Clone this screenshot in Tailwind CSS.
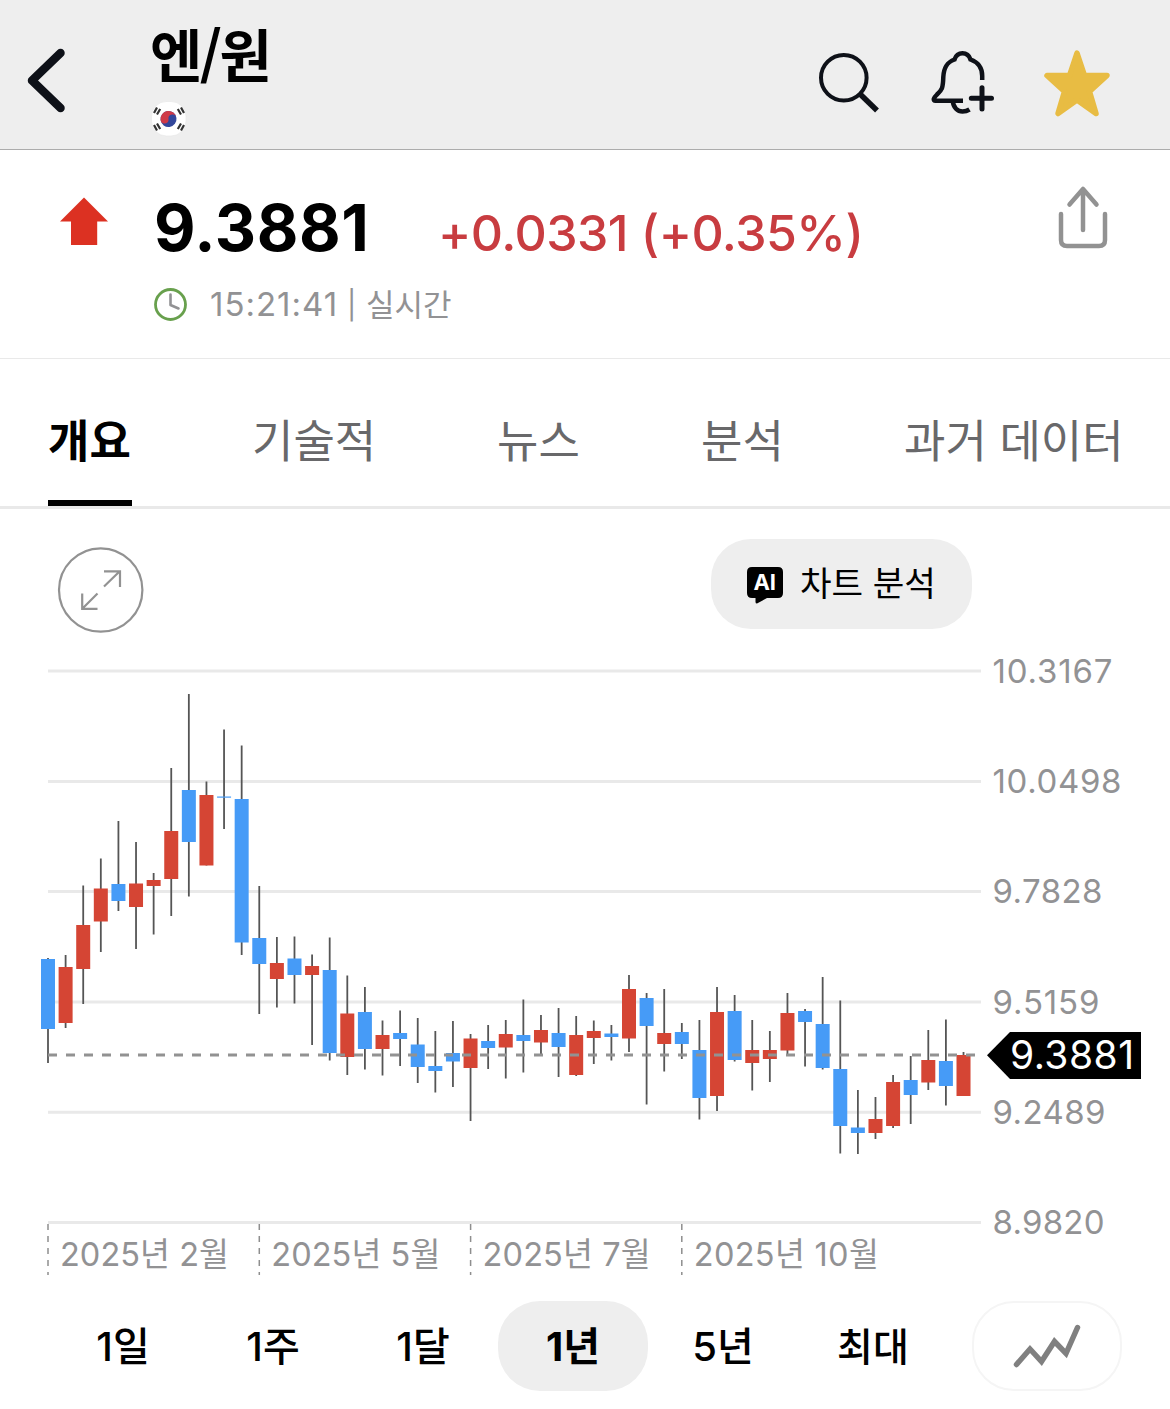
<!DOCTYPE html>
<html lang="ko">
<head>
    <meta charset="UTF-8">
    <meta name="viewport" content="width=device-width, initial-scale=1.0">
    <title>엔/원</title>
    <script src="https://cdn.jsdelivr.net/npm/@tailwindcss/browser@4"></script>
</head>
<body class="bg-white font-['Inter','Noto_Sans_CJK_KR',sans-serif] text-black">

<div class="w-[1170px] h-[1409px] overflow-hidden flex flex-col">
    <!-- Header -->
    <header class="h-[150px] shrink-0 bg-[#eeeeee] border-b border-[#acacac] flex items-start">
        <svg class="w-[100px] h-[149px] shrink-0" viewBox="0 0 100 149" fill="none">
            <path d="M60.5 53 32 80.5 60.5 108" stroke="#0e1118" stroke-width="8.5" stroke-linecap="round" stroke-linejoin="round"/>
        </svg>
        <div class="pl-[50px] pt-[24px] flex-1">
            <h1 class="h-[64px] text-[57px] leading-[56px] font-bold tracking-[-2.6px] whitespace-nowrap font-['Noto_Sans_CJK_KR',sans-serif]">엔/원</h1>
            <svg class="w-[36px] h-[36px] mt-[13px] ml-px" viewBox="0 0 36 36">
                <rect x=".5" y=".5" width="34.5" height="34.5" rx="15" fill="#fff" stroke="#e6e6e6" stroke-width=".6"/>
                <g transform="rotate(-8 17.5 18)">
                    <circle cx="17.5" cy="18" r="8" fill="#33479b"/>
                    <path d="M9.5 18A8 8 0 0 1 25.5 18A4 4 0 0 0 17.5 18A4 4 0 0 1 9.5 18Z" fill="#cf3a48"/>
                </g>
                <g stroke="#333" stroke-width="2.2">
                    <path d="M3 12 6 6.500M6 13.500 9.200 8"/>
                    <path d="M33 12 30 6.500M30 13.500 26.800 8"/>
                    <path d="M3 24 6 29.500M6 22.500 9.200 28"/>
                    <path d="M33 24 30 29.500M30 22.500 26.800 28"/>
                </g>
            </svg>
        </div>
        <svg class="w-[370px] h-[149px] shrink-0" viewBox="800 0 370 149" fill="none">
            <circle cx="843.800" cy="77.700" r="22.800" stroke="#0e1118" stroke-width="4"/>
            <path d="M859.500 93.500 877 110.500" stroke="#0e1118" stroke-width="5.500"/>
            <g stroke="#0e1118" stroke-width="4.500">
                <path d="M982.200 80V76C982.200 68 979 62.500 970.500 59.500C969 55 966 53.300 962.500 53.300C959 53.300 956 55 954.500 59.500C946.500 62.500 943.700 68 943.300 77C943 88 942 90 937 94.500C933.500 98 932.500 100.700 935.500 100.700H963"/>
                <path d="M952.800 101C953.300 107.500 957.500 111.500 962.500 111.500C965.500 111.500 967.500 110.800 969.500 109.500"/>
                <path d="M982 87.800V109M971.300 98.300H991.500" stroke-width="5" stroke-linecap="round"/>
            </g>
            <path d="M1077 53 1084.500 75.500H1107L1089.500 91.500 1096 113.500 1077 100 1058 113.500 1064.500 91.500 1047 75.500H1069.500Z" fill="#e8bc43" stroke="#e8bc43" stroke-width="5.500" stroke-linejoin="round"/>
        </svg>
    </header>

    <!-- Quote -->
    <section class="h-[209px] shrink-0 border-b border-[#e9e9e9] flex items-start">
        <svg class="w-[154px] h-[130px] shrink-0" viewBox="0 150 154 130">
            <path d="M84 197.500 108 221.500H97.200V245H71V221.500H60Z" fill="#dc3122"/>
        </svg>
        <div class="flex-1">
            <div class="flex items-baseline pt-[40px] h-[121px] whitespace-nowrap">
                <span class="w-[284px] text-[64px] leading-[76px] font-bold tracking-[0.6px]">9.3881</span>
                <span class="text-[50px] leading-[76px] font-medium text-[#c83c40] tracking-[-0.55px]">+0.0331 (+0.35%)</span>
            </div>
            <div class="flex items-center h-[68px] text-[#929294] whitespace-nowrap">
                <svg class="w-[34px] h-[34px] mr-[22px]" viewBox="0 0 34 34" fill="none">
                    <circle cx="16.500" cy="16.500" r="15" stroke="#68a04d" stroke-width="2.800"/>
                    <path d="M16.500 6.500V17L24.500 20.500" stroke="#929294" stroke-width="2.600" stroke-linecap="round" stroke-linejoin="round"/>
                </svg>
                <span class="w-[137px] text-[33px] tracking-[1px]">15:21:41</span>
                <span class="w-[19px] text-[28px]">|</span>
                <span class="text-[31px]">실시간</span>
            </div>
        </div>
        <svg class="w-[130px] h-[130px] shrink-0" viewBox="1040 150 130 130" fill="none" stroke="#929292" stroke-width="4.500" stroke-linecap="round" stroke-linejoin="round">
            <path d="M1083 230V190M1069.500 204.500 1083 189 1096.500 204.500M1061 214V240Q1061 246 1067 246H1099Q1105 246 1105 240V214"/>
        </svg>
    </section>

    <!-- Tabs -->
    <nav class="h-[150px] shrink-0 border-b-3 border-[#e9e9e9] pl-[48px] flex gap-[120px] text-[45px] text-[#68686a] leading-[166px] whitespace-nowrap">
        <a class="w-[84px] border-b-6 border-black text-black font-bold">개요</a>
        <a class="w-[125px]">기술적</a>
        <a class="w-[84px]">뉴스</a>
        <a class="w-[83px]">분석</a>
        <a>과거 데이터</a>
    </nav>

    <!-- Chart toolbar -->
    <div class="h-[141px] shrink-0 pl-[57px] pr-[198px] flex justify-between items-start">
        <svg class="w-[88px] h-[88px] mt-[37px]" viewBox="57 546 88 88" fill="none" stroke="#929292" stroke-width="2.200">
            <circle cx="100.700" cy="590" r="41.700"/>
            <path d="M104 586.500 120 571M104 571.300H120V587M97.500 593.500 82 609M82.200 593.500V608.800H97.500"/>
        </svg>
        <button class="w-[261px] h-[90px] mt-[30px] rounded-[40px] bg-[#eeeeee] flex items-center pl-[36px] text-[34.3px] whitespace-nowrap">
            <svg class="w-[36px] h-[37px] mr-[17px] mt-[3px]" viewBox="0 0 36 37">
                <path d="M5 0H31Q36 0 36 5V26Q36 31 31 31H20L10 36.500Q8.500 36.500 8.500 35V31H5Q0 31 0 26V5Q0 0 5 0Z"/>
                <text x="6.500" y="23" font-size="22" font-weight="700" fill="#fff" textLength="22.500">AI</text>
            </svg>
            차트 분석
        </button>
    </div>

    <!-- Candlestick chart -->
    <svg id="chart" class="w-[1170px] h-[638px] shrink-0" viewBox="0 650 1170 638"></svg>

    <!-- Range selector -->
    <div class="h-[121px] shrink-0 pl-[48px] pt-[13px] flex text-[40px] font-medium leading-[89px] text-center whitespace-nowrap">
        <button class="w-[150px] h-[90px]">1일</button>
        <button class="w-[150px] h-[90px]">1주</button>
        <button class="w-[150px] h-[90px]">1달</button>
        <button class="w-[150px] h-[90px] rounded-[42px] bg-[#eeeeee] font-bold">1년</button>
        <button class="w-[150px] h-[90px]">5년</button>
        <button class="w-[150px] h-[90px] text-[39px]">최대</button>
        <button class="w-[150px] h-[90px] ml-[24px] rounded-[42px] border-2 border-[#f5f5f5] flex items-center justify-center">
            <svg class="w-[70px] h-[46px]" viewBox="1012 1323 70 46" fill="none" stroke="#808080" stroke-width="5.500" stroke-linecap="round" stroke-linejoin="miter">
                <path d="M1016.500 1364.500 1030 1349 1041.500 1361.500 1054.500 1341.500 1066 1353.500 1077.500 1327.500"/>
            </svg>
        </button>
    </div>
</div>

<script>
    // [high, body top, body bottom, low, up]
    const candles = [
        [958, 959, 1029, 1063, 0], [955, 967, 1023, 1028, 1], [885.5, 925, 969, 1004, 1],
        [858.5, 888.5, 921.5, 952, 1], [821, 884, 901, 911, 0], [842, 883.5, 907, 949, 1],
        [873, 880, 886, 934.5, 1], [768, 831, 879, 916, 1], [694, 790, 842, 896.5, 0],
        [781.5, 795, 865.5, 865.5, 1], [729.5, 796.5, 797.7, 829, 0], [745.5, 799, 942.5, 955, 0],
        [886, 938, 964, 1014, 0], [937, 963, 979, 1007.5, 1], [936.5, 958.5, 975, 1003.5, 0],
        [954.5, 966, 975, 1045, 1], [937.5, 970, 1053, 1060.5, 0], [975.5, 1013.5, 1057, 1075, 1],
        [987, 1012, 1049, 1069.5, 0], [1020.5, 1035, 1049, 1075.5, 1], [1010.5, 1033, 1039, 1066, 0],
        [1018, 1044.5, 1067, 1083, 0], [1031, 1066, 1071, 1092.5, 0], [1021, 1053, 1061.5, 1087, 0],
        [1034, 1038.5, 1068, 1121, 1], [1025, 1041, 1048, 1069, 0], [1020, 1034, 1047.5, 1078.5, 1],
        [999.5, 1035, 1041, 1072.5, 0], [1015, 1030, 1042.5, 1054, 1], [1008, 1033, 1047, 1077, 0],
        [1016, 1035, 1075, 1076, 1], [1020.5, 1031, 1038, 1064, 1], [1025, 1033.5, 1037, 1060.5, 0],
        [975, 989, 1038.5, 1052, 1], [993, 998, 1026, 1104.5, 0], [989, 1033, 1044, 1071.5, 1],
        [1023, 1032, 1044, 1059, 0], [1020, 1050, 1098, 1119.5, 0], [987, 1012, 1096, 1111, 1],
        [995, 1011, 1060, 1061.5, 0], [1020, 1050, 1063, 1090.5, 1], [1031, 1050, 1059, 1082, 1],
        [993, 1013, 1050.5, 1054, 1], [1009, 1011, 1022, 1066.5, 0], [977, 1024, 1068, 1069.5, 0],
        [1000.5, 1069, 1126, 1153.5, 0], [1090, 1127.5, 1133, 1154, 0], [1097, 1119, 1133, 1139, 1],
        [1075, 1082, 1126, 1128, 1], [1056, 1080, 1095, 1124, 0], [1030, 1060, 1082.5, 1090, 1],
        [1019.5, 1061, 1086, 1105.5, 0], [1052, 1055, 1096, 1096, 1],
    ];

    const priceLabels = [
        ['10.3167', 671, 120], ['10.0498', 781.4, 129], ['9.7828', 891.5, 110],
        ['9.5159', 1002, 107], ['9.2489', 1112.3, 113], ['8.9820', 1222.5, 112],
    ];

    const dateLabels = [
        ['2025년 2월', 48, 169], ['2025년 5월', 259.3, 169], ['2025년 7월', 470.6, 168], ['2025년 10월', 681.8, 185],
    ];

    let svg = '';

    // Grid and price axis
    priceLabels.forEach(([text, y, width]) => {
        svg += `<path d="M48 ${y}H981" stroke="#e9e9e9" stroke-width="3"/>
            <text x="992.5" y="${y + 11.5}" font-size="33" fill="#929294" textLength="${width}">${text}</text>`;
    });

    // Date axis
    dateLabels.forEach(([text, x, width]) => {
        svg += `<path d="M${x} 1224V1275" stroke="#8e8e8e" stroke-width="1.5" stroke-dasharray="6 6"/>
            <text x="${x + 12}" y="1266" font-size="32.5" fill="#929294" textLength="${width}">${text}</text>`;
    });

    // Candles
    candles.forEach(([high, top, bottom, low, up], i) => {
        const x = 48 + i * 17.606;
        svg += `<path d="M${x} ${high}V${low}" stroke="#555" stroke-width="1.8"/>
            <rect x="${x - 7}" y="${top}" width="14" height="${bottom - top}" fill="${up ? '#d54534' : '#469bf7'}"/>`;
    });

    // Last price
    svg += `<path d="M48 1055H975" stroke="#929292" stroke-width="2.8" stroke-dasharray="9 9"/>
        <path d="M987 1055.300 1010 1032H1141V1079H1010Z" fill="#000"/>
        <text x="1010" y="1069" font-size="39" fill="#fff" textLength="124">9.3881</text>`;

    document.getElementById('chart').innerHTML = svg;
</script>

</body>
</html>
